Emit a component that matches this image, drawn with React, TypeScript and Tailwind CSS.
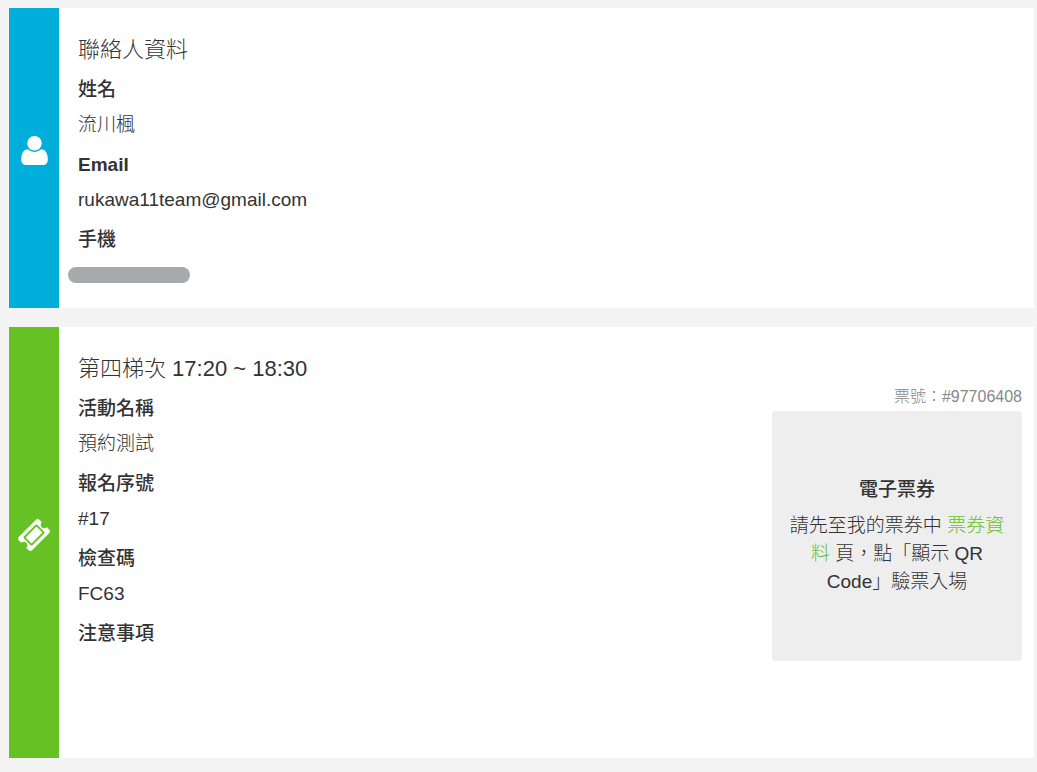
import React from 'react';

type Field = { label: string; latin?: boolean; value?: React.ReactNode };

const contactFields: Field[] = [
    { label: '姓名', value: '流川楓' },
    { label: 'Email', latin: true, value: 'rukawa11team@gmail.com' },
    { label: '手機', value: <span className="block w-[122px] h-4 rounded-full bg-[#a7a9ac] -ml-[10px]" /> },
];

const ticketFields: Field[] = [
    { label: '活動名稱', value: '預約測試' },
    { label: '報名序號', value: '#17' },
    { label: '檢查碼', value: 'FC63' },
    { label: '注意事項' },
];

function UserIcon() {
    return (
        <svg viewBox="0 0 1408 1536" className="w-[27px] h-[29px]" fill="currentColor" aria-hidden="true">
            <path d="M1408 1277q0 120-73 189.5t-194 69.5h-874q-121 0-194-69.5t-73-189.5q0-53 3.5-103.5t14-109 26.5-108.5 43-97.5 62-81 85.5-53.5 111.5-20q9 0 42 21.5t74.5 48 108 48 133.5 21.5 133.5-21.5 108-48 74.5-48 42-21.5q61 0 111.5 20t85.5 53.5 62 81 43 97.5 26.5 108.5 14 109 3.5 103.5zm-320-893q0 159-112.5 271.5t-271.5 112.5-271.5-112.5-112.5-271.5 112.5-271.5 271.5-112.5 271.5 112.5 112.5 271.5z" />
        </svg>
    );
}

function TicketIcon() {
    return (
        <svg viewBox="0 0 1792 1792" className="w-[34px] h-[34px]" fill="currentColor" aria-hidden="true">
            <path d="M1024 452l316 316-572 572-316-316zm-211 979l618-618q19-19 19-45t-19-45l-362-362q-18-18-45-18t-45 18l-618 618q-19 19-19 45t19 45l362 362q18 18 45 18t45-18zm889-637l-907 908q-37 37-90.5 37t-90.5-37l-126-125q56-56 56-136t-56-136-136-56-136 56l-125-126q-37-37-37-90.5t37-90.5l907-906q37-37 90.5-37t90.5 37l125 125q-56 56-56 136t56 136 136 56 136-56l126 125q37 37 37 90.5t-37 90.5z" />
        </svg>
    );
}

function Details({ title, fields }: { title: string; fields: Field[] }) {
    return (
        <div className="flex-1 min-w-0">
            <h2 className="text-[22px] leading-7 mb-3">{title}</h2>
            <dl className="flex flex-col gap-3">
                {fields.map((f) => (
                    <div key={f.label} className="flex flex-col gap-[7px]">
                        <dt className={f.latin ? 'font-bold' : 'font-medium'}>{f.label}</dt>
                        <dd className="min-h-7 flex items-center">{f.value}</dd>
                    </div>
                ))}
            </dl>
        </div>
    );
}

function Card({ icon, color, children }: { icon: React.ReactNode; color: string; children: React.ReactNode }) {
    return (
        <section className="flex bg-white">
            <div className={`w-[50px] shrink-0 flex items-center justify-center pb-4 text-white ${color}`}>{icon}</div>
            {children}
        </section>
    );
}

export default function App() {
    return (
        <main className="min-h-screen bg-[#f4f4f4] pt-2 pl-[9px] pr-[3px] pb-[14px] flex flex-col gap-[19px] text-[19px] leading-7 font-light text-[#333] font-['Liberation_Sans','Noto_Sans_CJK_TC',sans-serif]">
            <Card icon={<UserIcon />} color="bg-[#00aedb]">
                <div className="flex flex-1 pt-7 pl-[19px] pr-3 pb-[19px]">
                    <Details title="聯絡人資料" fields={contactFields} />
                </div>
            </Card>

            <Card icon={<TicketIcon />} color="bg-[#66c125]">
                <div className="flex flex-1 pt-7 pl-[19px] pr-3 pb-[75px]">
                    <Details title="第四梯次 17:20 ~ 18:30" fields={ticketFields} />
                    <aside className="w-[250px] shrink-0 pt-7">
                        <p className="text-base leading-7 text-right text-[#888]">票號：#97706408</p>
                        <div className="h-[250px] rounded bg-[#eee] px-4 flex flex-col justify-center gap-2 text-center">
                            <h3 className="font-medium">電子票券</h3>
                            <p>
                                請先至我的票券中 <a href="#tickets" className="text-[#66c125]">票券資料</a> 頁，點「顯示 QR Code」驗票入場
                            </p>
                        </div>
                    </aside>
                </div>
            </Card>
        </main>
    );
}
